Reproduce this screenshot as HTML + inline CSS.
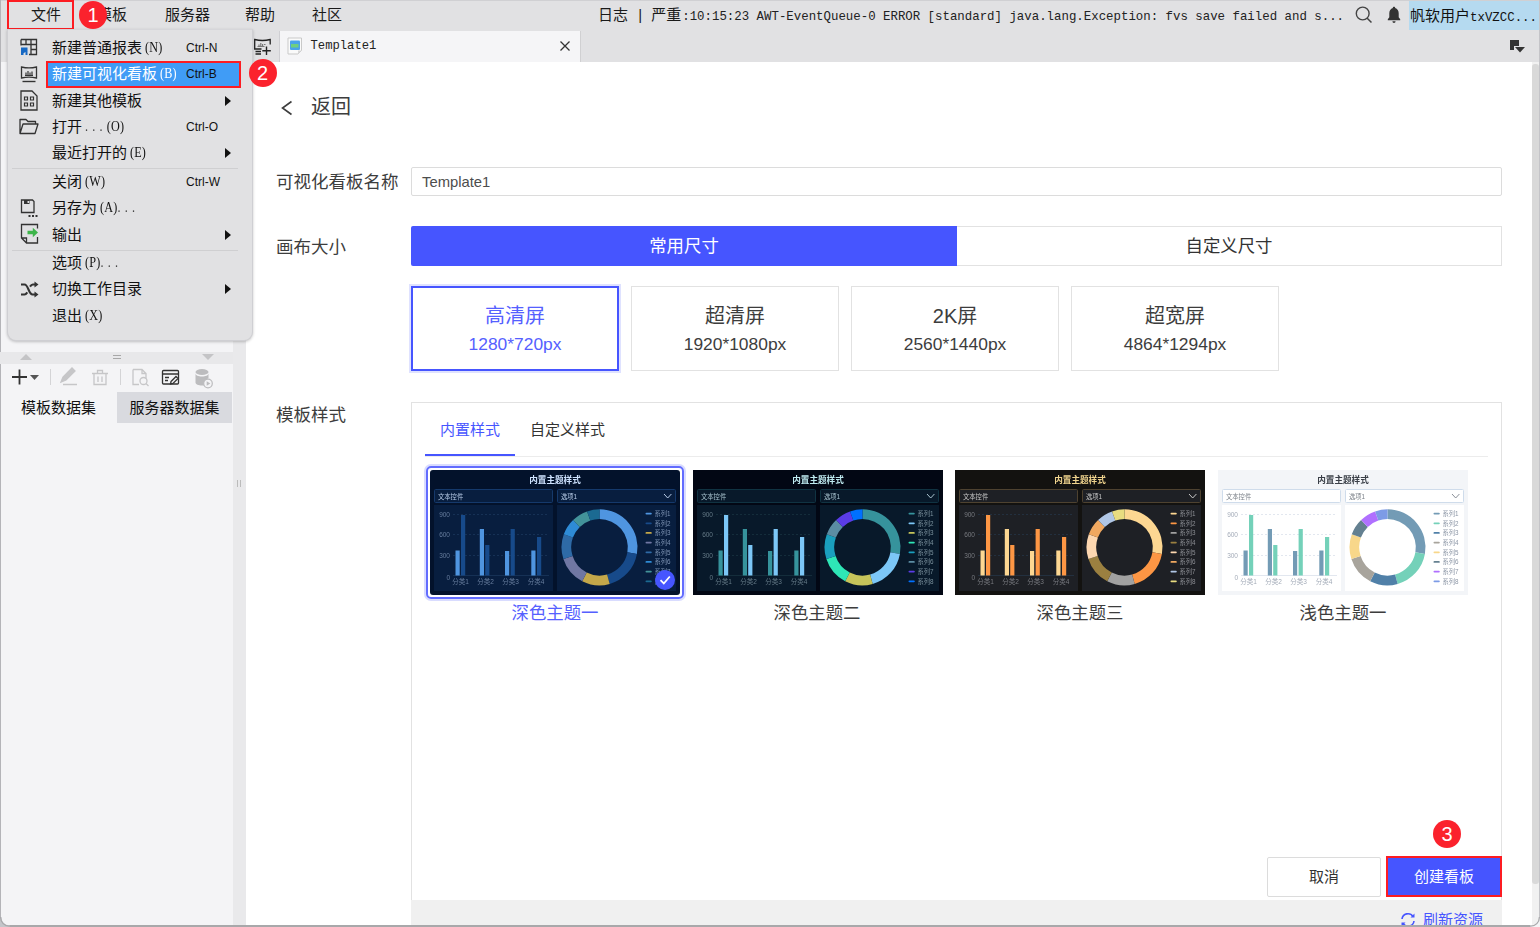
<!DOCTYPE html>
<html lang="zh-CN">
<head>
<meta charset="utf-8">
<title>新建可视化看板</title>
<style>
*{box-sizing:border-box;margin:0;padding:0}
html,body{width:1540px;height:927px;overflow:hidden;background:#fff}
body{font-family:"Liberation Sans","Noto Sans CJK SC",sans-serif;color:#333;position:relative;font-size:14px}
.abs{position:absolute}
#topbar{left:0;top:0;width:1540px;height:30px;background:#e1e1e3;border-top:1px solid #d0d0d3}
#tabbar{left:0;top:30px;width:1540px;height:32px;background:#e1e1e3}
.mi{position:absolute;top:0;height:30px;line-height:29px;font-size:15px;color:#1a1a1a;white-space:nowrap}
#log{left:598px;top:0;height:30px;line-height:30px;font-size:15px;color:#1a1a1a;white-space:nowrap}
#log .m{font-family:"Liberation Mono","Noto Sans CJK SC",monospace;font-size:12.4px;color:#222}
#user{left:1409px;top:0.5px;width:129.5px;height:29.5px;background:#b5daf0;line-height:29px;font-size:15px;color:#111;white-space:nowrap;overflow:hidden;padding-left:1px}
#user .m{font-family:"Liberation Mono",monospace;font-size:12.4px}
#left{left:0;top:62px;width:233px;height:865px;background:#f4f4f6}
#split{left:233px;top:62px;width:13px;height:865px;background:#e9e9eb}
#main{left:246px;top:62px;width:1286px;height:865px;background:#fff}
#tab{left:278.500px;top:31px;width:302px;height:31px;background:#f5f5f7;border-right:1px solid #d0d0d2;border-left:1.500px solid #cfcfd3}
#tab span{position:absolute;left:31px;top:0;line-height:30px;font-family:"Liberation Mono",monospace;font-size:12.2px;color:#222}
#menu{left:7px;top:29px;width:246px;height:312px;background:#e1e1e3;border-radius:0 0 9px 9px;box-shadow:0 1px 3px rgba(0,0,0,.22);border:1px solid #cfcfd3;border-top-color:#d6d6da}
.row{position:absolute;left:0;width:245px;height:26px;line-height:26px;font-size:15px;color:#111;white-space:nowrap}
.row .t{position:absolute;left:44px;top:0}
.row .k{position:absolute;left:178px;top:0;font-size:12px;color:#111}
.row .ar{position:absolute;left:217px;top:8px;width:0;height:0;border-left:6px solid #111;border-top:5px solid transparent;border-bottom:5px solid transparent}
.row .p{font-family:"Liberation Serif",serif;font-size:14.500px;letter-spacing:0.2px;margin-left:3px;position:relative;top:-1px;display:inline-block;transform:scaleX(.84);transform-origin:0 50%;line-height:20px;vertical-align:baseline}
.row .d{letter-spacing:5px;margin:0;color:#444}
.sep{position:absolute;left:4px;width:226px;height:1px;background:#cfcfd1}
.badge{position:absolute;width:28px;height:28px;border-radius:14px;background:#fb222d;color:#fff;font-size:20px;line-height:28px;text-align:center;font-family:"Liberation Sans",sans-serif}
.lbl{position:absolute;font-size:17.500px;color:#3d3d3d;white-space:nowrap;line-height:22px}

#back{left:280px;top:94px;font-size:20px;color:#3d3d3d;line-height:26px;white-space:nowrap}
#inp{left:411px;top:166.500px;width:1091px;height:29.500px;border:1px solid #dcdcdc;border-radius:2px;font-size:14.800px;line-height:29.500px;padding-left:10px;color:#4d4d4d}
.seg{position:absolute;top:226px;height:40px;line-height:41px;text-align:center;font-size:17.4px}
.card{position:absolute;top:286px;width:208px;height:85px;border:1px solid #e2e2e2;text-align:center;color:#3d3d3d;background:#fff}
.card b{display:block;font-weight:normal;font-size:20px;line-height:24px;margin-top:17px}
.card i{display:block;font-style:normal;font-size:17.4px;line-height:22px;margin-top:5px}
.card.sel{border:2px solid #4655ff;box-shadow:0 0 0 2px #dfe2ff;color:#5560ff}
.card.sel b{margin-top:16px}
#panel{left:411px;top:402px;width:1091px;height:500px;border:1px solid #e2e2e2;border-bottom:none;background:#fff}
.stab{position:absolute;top:418px;font-size:15px;line-height:24px;color:#333;white-space:nowrap}
.th{position:absolute;top:470px;width:250px;height:125px}
.tl{position:absolute;top:601px;width:250px;text-align:center;font-size:17.4px;line-height:24px;color:#3d3d3d}
.btn{position:absolute;top:857px;height:40px;line-height:38px;text-align:center;font-size:15px}

.dt{position:absolute;top:392px;height:31px;line-height:31px;font-size:15px;color:#111;text-align:center;white-space:nowrap}
</style>
</head>
<body>
<div id="topbar" class="abs"></div>
<div id="tabbar" class="abs"></div>
<div id="left" class="abs"></div>
<div id="split" class="abs"></div>
<div id="main" class="abs"></div>

<div class="mi" style="left:31px">文件</div>
<div class="mi" style="left:97px">模板</div>
<div class="mi" style="left:165px">服务器</div>
<div class="mi" style="left:245px">帮助</div>
<div class="mi" style="left:312px">社区</div>
<div class="abs" style="left:7px;top:0;width:67px;height:30px;border:2px solid #fd1c22"></div>
<div id="log" class="abs">日志 <span style="margin:0 5px 0 6px">|</span> 严重<span class="m" style="margin-left:1px">:10:15:23 AWT-EventQueue-0 ERROR [standard] java.lang.Exception: fvs save failed and s...</span></div>
<svg class="abs" style="left:1354px;top:5.2px" width="20" height="20" viewBox="0 0 20 20"><circle cx="8.7" cy="8.5" r="6.4" fill="none" stroke="#444" stroke-width="1.4"/><path d="M13 13l4.5 4.5" stroke="#444" stroke-width="1.5" fill="none"/></svg>
<svg class="abs" style="left:1385px;top:4.9px" width="18" height="19.5" viewBox="0 0 18 18" preserveAspectRatio="none"><path d="M9 1.500c-.7 0-1.200.5-1.200 1.200C5.600 3.400 4.300 5.300 4.300 7.600v3.600L2.800 13.200v.9h12.400v-.9l-1.500-2V7.600c0-2.300-1.300-4.200-3.500-4.900 0-.7-.5-1.200-1.200-1.200zM7.400 15a1.600 1.600 0 003.200 0z" fill="#333"/></svg>
<div id="user" class="abs">帆软用户<span class="m">txVZCC...</span></div>
<div id="tab" class="abs"><svg class="abs" style="left:7px;top:6px" width="16" height="18" viewBox="0 0 16 18"><path d="M1 1h13.500v12.500l-3.500 3.500H1z" fill="#fafafa" stroke="#c9c9c9" stroke-width="1"/><path d="M14.500 13.500h-3.500v3.500z" fill="#d8d8d8"/><rect x="3" y="3.500" width="10" height="9.500" rx="1" fill="#4aa3ea"/><rect x="4" y="7" width="7.500" height="3.500" fill="#6fcf7f"/></svg><span>Template1</span>
<svg class="abs" style="left:279px;top:9px" width="12" height="12" viewBox="0 0 12 12"><path d="M1.500 1.500l9 9M10.500 1.500l-9 9" stroke="#333" stroke-width="1.300" fill="none"/></svg></div>
<svg class="abs" style="left:253px;top:38px" width="20" height="18" viewBox="0 0 20 18"><path d="M8.500 11H1.700V1.500c5 1.300 10.500 1.300 15.500 0v5" fill="none" stroke="#222" stroke-width="1.300"/><path d="M2.500 13.500h5.500M2.500 16h5.500" stroke="#222" stroke-width="1.300"/><path d="M4.500 8.500h7M6 8V6.500M7.800 8V5M9.600 8V6M11 6.500h1.500" stroke="#777" stroke-width="1.200" fill="none"/><path d="M13.500 8.500v8.500M9.300 12.700h8.500" stroke="#222" stroke-width="1.400"/></svg>
<svg class="abs" style="left:1509px;top:39px" width="18" height="14" viewBox="0 0 18 14"><path d="M1 1h9v6H5v4H1z" fill="#333"/><path d="M6 8h10l-5 5.500z" fill="#333"/></svg>
<!--TOP-->

<div id="back" class="abs"><svg width="14" height="18" viewBox="0 0 14 18" style="vertical-align:-3px;margin-right:17px"><path d="M11.500 2.500L2.500 9l9 6.500" fill="none" stroke="#3d3d3d" stroke-width="1.600"/></svg>返回</div>
<div class="lbl" style="left:276px;top:171px">可视化看板名称</div>
<div id="inp" class="abs">Template1</div>
<div class="lbl" style="left:276px;top:235.500px">画布大小</div>
<div class="seg" style="left:411px;width:546px;background:#4655ff;color:#fff;border-radius:2px 0 0 2px">常用尺寸</div>
<div class="seg" style="left:957px;width:545px;border:1px solid #e2e2e2;border-left:none;color:#333;line-height:39px">自定义尺寸</div>
<div class="card sel" style="left:411px"><b>高清屏</b><i>1280*720px</i></div>
<div class="card" style="left:631px"><b>超清屏</b><i>1920*1080px</i></div>
<div class="card" style="left:851px"><b>2K屏</b><i>2560*1440px</i></div>
<div class="card" style="left:1071px"><b>超宽屏</b><i>4864*1294px</i></div>
<div class="lbl" style="left:276px;top:404px">模板样式</div>
<div id="panel" class="abs"></div>
<div class="stab" style="left:440px;color:#4655ff">内置样式</div>
<div class="stab" style="left:530px">自定义样式</div>
<div class="abs" style="left:425px;top:456px;width:1063px;height:1px;background:#ececec"></div>
<div class="abs" style="left:425px;top:454px;width:90px;height:2px;background:#4655ff"></div>
<div class="abs" style="left:426px;top:466px;width:258px;height:133px;border:2px solid #626cff;border-radius:5px;box-shadow:0 0 0 2px #d9dcff"></div>
<!--TH--><!--THS--><svg width="0" height="0" style="position:absolute"><defs><filter id="thb" color-interpolation-filters="sRGB" x="0" y="0" width="100%" height="100%"><feGaussianBlur stdDeviation="0.45"/></filter></defs></svg>
<svg class="th" style="left:430px" viewBox="0 0 250 125" font-family="Liberation Sans,Noto Sans CJK SC,sans-serif">
<rect width="250" height="125" rx="3" fill="#03122b"/>
<g filter="url(#thb)">
<text x="125" y="13" text-anchor="middle" font-size="8.600" font-weight="bold" fill="#cfe3ff">内置主题样式</text>
<rect x="4.500" y="19.500" width="118" height="13" rx="1" fill="#081e3f" stroke="#15396b"/><rect x="127.500" y="19.500" width="118" height="13" rx="1" fill="#081e3f" stroke="#15396b"/>
<text x="8" y="28.500" font-size="6.300" fill="#b9cde8">文本控件</text><text x="131" y="28.500" font-size="6.300" fill="#b9cde8">选项1</text>
<path d="M234 24l3.700 4 3.700-4" fill="none" stroke="#b9cde8" stroke-width="1"/>
<rect x="4" y="35" width="119" height="86" fill="#081e3f"/><rect x="127" y="35" width="119" height="86" fill="#081e3f"/>
<g font-size="6.500" fill="#7d93b3" opacity=".8" text-anchor="end"><text x="20" y="46.500">900</text><text x="20" y="67">600</text><text x="20" y="88">300</text><text x="20" y="109.500">0</text></g>
<path d="M23 44.500h96M23 64.500h96M23 85.500h96" stroke="#1d3a5e" stroke-width=".7" stroke-dasharray="2 2" fill="none"/><path d="M23 105.500h96" stroke="#1d3a5e" stroke-width=".7"/>
<path d="M25.5 80.5h4.200V105.500h-4.200zM49.8 59h4.200V105.500h-4.200zM75 81h4.200V105.500h-4.200zM101.3 80.5h4.200V105.500h-4.200z" fill="#4f95e0"/><path d="M31 45h4.200V105.500h-4.200zM55.2 75h4.200V105.500h-4.200zM80.6 59h4.200V105.500h-4.200zM107 67h4.200V105.500h-4.200z" fill="#174a8a"/>
<g font-size="6.500" fill="#7d93b3" opacity=".8" text-anchor="middle"><text x="30.500" y="114">分类1</text><text x="55.500" y="114">分类2</text><text x="80.500" y="114">分类3</text><text x="106" y="114">分类4</text></g>
<path d="M169.5 39.3A38.0 38.0 0 0 1 206.9 83.9L197.4 82.2A28.3 28.3 0 0 0 169.5 49.0Z" fill="#4f95e0"/><path d="M206.9 83.9A38.0 38.0 0 0 1 179.7 113.9L177.1 104.6A28.3 28.3 0 0 0 197.4 82.2Z" fill="#174a8a"/><path d="M179.7 113.9A38.0 38.0 0 0 1 152.2 111.2L156.7 102.5A28.3 28.3 0 0 0 177.1 104.6Z" fill="#c4a84a"/><path d="M152.2 111.2A38.0 38.0 0 0 1 133.4 89.0L142.6 86.0A28.3 28.3 0 0 0 156.7 102.5Z" fill="#7077a3"/><path d="M133.4 89.0A38.0 38.0 0 0 1 133.8 64.3L142.9 67.6A28.3 28.3 0 0 0 142.6 86.0Z" fill="#2e6aa6"/><path d="M133.8 64.3A38.0 38.0 0 0 1 143.1 50.0L149.8 56.9A28.3 28.3 0 0 0 142.9 67.6Z" fill="#2e8bd6"/><path d="M143.1 50.0A38.0 38.0 0 0 1 157.1 41.4L160.3 50.5A28.3 28.3 0 0 0 149.8 56.9Z" fill="#43939a"/><path d="M157.1 41.4A38.0 38.0 0 0 1 169.5 39.3L169.5 49.0A28.3 28.3 0 0 0 160.3 50.5Z" fill="#1b6a92"/>
<g font-size="6.300" fill="#7d93b3"><rect x="215.500" y="42.7" width="6.300" height="1.800" rx=".9" fill="#4f95e0"/><text x="224.500" y="45.9">系列1</text><rect x="215.500" y="52.4" width="6.300" height="1.800" rx=".9" fill="#174a8a"/><text x="224.500" y="55.6">系列2</text><rect x="215.500" y="62.0" width="6.300" height="1.800" rx=".9" fill="#c4a84a"/><text x="224.500" y="65.2">系列3</text><rect x="215.500" y="71.7" width="6.300" height="1.800" rx=".9" fill="#7077a3"/><text x="224.500" y="74.9">系列4</text><rect x="215.500" y="81.4" width="6.300" height="1.800" rx=".9" fill="#2e6aa6"/><text x="224.500" y="84.6">系列5</text><rect x="215.500" y="91.0" width="6.300" height="1.800" rx=".9" fill="#2e8bd6"/><text x="224.500" y="94.2">系列6</text><rect x="215.500" y="100.7" width="6.300" height="1.800" rx=".9" fill="#43939a"/><text x="224.500" y="103.9">系列7</text><rect x="215.500" y="110.4" width="6.300" height="1.800" rx=".9" fill="#1b6a92"/><text x="224.500" y="113.6">系列8</text></g>
</g>
</svg>
<svg class="th" style="left:692.5px" viewBox="0 0 250 125" font-family="Liberation Sans,Noto Sans CJK SC,sans-serif">
<rect width="250" height="125" rx="0" fill="#020714"/>
<g filter="url(#thb)">
<text x="125" y="13" text-anchor="middle" font-size="8.600" font-weight="bold" fill="#bfeaf0">内置主题样式</text>
<rect x="4.500" y="19.500" width="118" height="13" rx="1" fill="#08192a" stroke="#103342"/><rect x="127.500" y="19.500" width="118" height="13" rx="1" fill="#08192a" stroke="#103342"/>
<text x="8" y="28.500" font-size="6.300" fill="#a9c3cf">文本控件</text><text x="131" y="28.500" font-size="6.300" fill="#a9c3cf">选项1</text>
<path d="M234 24l3.700 4 3.700-4" fill="none" stroke="#a9c3cf" stroke-width="1"/>
<rect x="4" y="35" width="119" height="86" fill="#08192a"/><rect x="127" y="35" width="119" height="86" fill="#08192a"/>
<g font-size="6.500" fill="#7a909c" opacity=".8" text-anchor="end"><text x="20" y="46.500">900</text><text x="20" y="67">600</text><text x="20" y="88">300</text><text x="20" y="109.500">0</text></g>
<path d="M23 44.500h96M23 64.500h96M23 85.500h96" stroke="#1a3644" stroke-width=".7" stroke-dasharray="2 2" fill="none"/><path d="M23 105.500h96" stroke="#1a3644" stroke-width=".7"/>
<path d="M25.5 80.5h4.200V105.500h-4.200zM49.8 59h4.200V105.500h-4.200zM75 81h4.200V105.500h-4.200zM101.3 80.5h4.200V105.500h-4.200z" fill="#36939c"/><path d="M31 45h4.200V105.500h-4.200zM55.2 75h4.200V105.500h-4.200zM80.6 59h4.200V105.500h-4.200zM107 67h4.200V105.500h-4.200z" fill="#7cc7f7"/>
<g font-size="6.500" fill="#7a909c" opacity=".8" text-anchor="middle"><text x="30.500" y="114">分类1</text><text x="55.500" y="114">分类2</text><text x="80.500" y="114">分类3</text><text x="106" y="114">分类4</text></g>
<path d="M169.5 39.3A38.0 38.0 0 0 1 206.9 83.9L197.4 82.2A28.3 28.3 0 0 0 169.5 49.0Z" fill="#36939c"/><path d="M206.9 83.9A38.0 38.0 0 0 1 179.7 113.9L177.1 104.6A28.3 28.3 0 0 0 197.4 82.2Z" fill="#7cc7f7"/><path d="M179.7 113.9A38.0 38.0 0 0 1 152.2 111.2L156.7 102.5A28.3 28.3 0 0 0 177.1 104.6Z" fill="#c6c45a"/><path d="M152.2 111.2A38.0 38.0 0 0 1 133.4 89.0L142.6 86.0A28.3 28.3 0 0 0 156.7 102.5Z" fill="#2ee6b6"/><path d="M133.4 89.0A38.0 38.0 0 0 1 133.8 64.3L142.9 67.6A28.3 28.3 0 0 0 142.6 86.0Z" fill="#1a9fbd"/><path d="M133.8 64.3A38.0 38.0 0 0 1 143.1 50.0L149.8 56.9A28.3 28.3 0 0 0 142.9 67.6Z" fill="#5b8da3"/><path d="M143.1 50.0A38.0 38.0 0 0 1 157.1 41.4L160.3 50.5A28.3 28.3 0 0 0 149.8 56.9Z" fill="#5a3ce6"/><path d="M157.1 41.4A38.0 38.0 0 0 1 169.5 39.3L169.5 49.0A28.3 28.3 0 0 0 160.3 50.5Z" fill="#0070ff"/>
<g font-size="6.300" fill="#7a909c"><rect x="215.500" y="42.7" width="6.300" height="1.800" rx=".9" fill="#36939c"/><text x="224.500" y="45.9">系列1</text><rect x="215.500" y="52.4" width="6.300" height="1.800" rx=".9" fill="#7cc7f7"/><text x="224.500" y="55.6">系列2</text><rect x="215.500" y="62.0" width="6.300" height="1.800" rx=".9" fill="#c6c45a"/><text x="224.500" y="65.2">系列3</text><rect x="215.500" y="71.7" width="6.300" height="1.800" rx=".9" fill="#2ee6b6"/><text x="224.500" y="74.9">系列4</text><rect x="215.500" y="81.4" width="6.300" height="1.800" rx=".9" fill="#1a9fbd"/><text x="224.500" y="84.6">系列5</text><rect x="215.500" y="91.0" width="6.300" height="1.800" rx=".9" fill="#5b8da3"/><text x="224.500" y="94.2">系列6</text><rect x="215.500" y="100.7" width="6.300" height="1.800" rx=".9" fill="#5a3ce6"/><text x="224.500" y="103.9">系列7</text><rect x="215.500" y="110.4" width="6.300" height="1.800" rx=".9" fill="#0070ff"/><text x="224.500" y="113.6">系列8</text></g>
</g>
</svg>
<svg class="th" style="left:955px" viewBox="0 0 250 125" font-family="Liberation Sans,Noto Sans CJK SC,sans-serif">
<rect width="250" height="125" rx="0" fill="#131210"/>
<g filter="url(#thb)">
<text x="125" y="13" text-anchor="middle" font-size="8.600" font-weight="bold" fill="#f0d48e">内置主题样式</text>
<rect x="4.500" y="19.500" width="118" height="13" rx="1" fill="#1e2025" stroke="#4e4230"/><rect x="127.500" y="19.500" width="118" height="13" rx="1" fill="#1e2025" stroke="#4e4230"/>
<text x="8" y="28.500" font-size="6.300" fill="#c8c8c8">文本控件</text><text x="131" y="28.500" font-size="6.300" fill="#c8c8c8">选项1</text>
<path d="M234 24l3.700 4 3.700-4" fill="none" stroke="#c8c8c8" stroke-width="1"/>
<rect x="4" y="35" width="119" height="86" fill="#1e2025"/><rect x="127" y="35" width="119" height="86" fill="#1e2025"/>
<g font-size="6.500" fill="#8c8e94" opacity=".8" text-anchor="end"><text x="20" y="46.500">900</text><text x="20" y="67">600</text><text x="20" y="88">300</text><text x="20" y="109.500">0</text></g>
<path d="M23 44.500h96M23 64.500h96M23 85.500h96" stroke="#25384a" stroke-width=".7" stroke-dasharray="2 2" fill="none"/><path d="M23 105.500h96" stroke="#25384a" stroke-width=".7"/>
<path d="M25.5 80.5h4.200V105.500h-4.200zM49.8 59h4.200V105.500h-4.200zM75 81h4.200V105.500h-4.200zM101.3 80.5h4.200V105.500h-4.200z" fill="#fdd792"/><path d="M31 45h4.200V105.500h-4.200zM55.2 75h4.200V105.500h-4.200zM80.6 59h4.200V105.500h-4.200zM107 67h4.200V105.500h-4.200z" fill="#fd9644"/>
<g font-size="6.500" fill="#8c8e94" opacity=".8" text-anchor="middle"><text x="30.500" y="114">分类1</text><text x="55.500" y="114">分类2</text><text x="80.500" y="114">分类3</text><text x="106" y="114">分类4</text></g>
<path d="M169.5 39.3A38.0 38.0 0 0 1 206.9 83.9L197.4 82.2A28.3 28.3 0 0 0 169.5 49.0Z" fill="#fdd792"/><path d="M206.9 83.9A38.0 38.0 0 0 1 179.7 113.9L177.1 104.6A28.3 28.3 0 0 0 197.4 82.2Z" fill="#fd9644"/><path d="M179.7 113.9A38.0 38.0 0 0 1 152.2 111.2L156.7 102.5A28.3 28.3 0 0 0 177.1 104.6Z" fill="#a1a1a1"/><path d="M152.2 111.2A38.0 38.0 0 0 1 133.4 89.0L142.6 86.0A28.3 28.3 0 0 0 156.7 102.5Z" fill="#9b8040"/><path d="M133.4 89.0A38.0 38.0 0 0 1 133.8 64.3L142.9 67.6A28.3 28.3 0 0 0 142.6 86.0Z" fill="#fdd7b0"/><path d="M133.8 64.3A38.0 38.0 0 0 1 143.1 50.0L149.8 56.9A28.3 28.3 0 0 0 142.9 67.6Z" fill="#f0a860"/><path d="M143.1 50.0A38.0 38.0 0 0 1 157.1 41.4L160.3 50.5A28.3 28.3 0 0 0 149.8 56.9Z" fill="#b0c6e6"/><path d="M157.1 41.4A38.0 38.0 0 0 1 169.5 39.3L169.5 49.0A28.3 28.3 0 0 0 160.3 50.5Z" fill="#e8dc80"/>
<g font-size="6.300" fill="#8c8e94"><rect x="215.500" y="42.7" width="6.300" height="1.800" rx=".9" fill="#fdd792"/><text x="224.500" y="45.9">系列1</text><rect x="215.500" y="52.4" width="6.300" height="1.800" rx=".9" fill="#fd9644"/><text x="224.500" y="55.6">系列2</text><rect x="215.500" y="62.0" width="6.300" height="1.800" rx=".9" fill="#a1a1a1"/><text x="224.500" y="65.2">系列3</text><rect x="215.500" y="71.7" width="6.300" height="1.800" rx=".9" fill="#9b8040"/><text x="224.500" y="74.9">系列4</text><rect x="215.500" y="81.4" width="6.300" height="1.800" rx=".9" fill="#fdd7b0"/><text x="224.500" y="84.6">系列5</text><rect x="215.500" y="91.0" width="6.300" height="1.800" rx=".9" fill="#f0a860"/><text x="224.500" y="94.2">系列6</text><rect x="215.500" y="100.7" width="6.300" height="1.800" rx=".9" fill="#b0c6e6"/><text x="224.500" y="103.9">系列7</text><rect x="215.500" y="110.4" width="6.300" height="1.800" rx=".9" fill="#e8dc80"/><text x="224.500" y="113.6">系列8</text></g>
</g>
</svg>
<svg class="th" style="left:1218px" viewBox="0 0 250 125" font-family="Liberation Sans,Noto Sans CJK SC,sans-serif">
<rect width="250" height="125" rx="0" fill="#f3f5f8"/>
<g filter="url(#thb)">
<text x="125" y="13" text-anchor="middle" font-size="8.600" font-weight="bold" fill="#3a3f47">内置主题样式</text>
<rect x="4.500" y="19.500" width="118" height="13" rx="1" fill="#ffffff" stroke="#cfdceb"/><rect x="127.500" y="19.500" width="118" height="13" rx="1" fill="#ffffff" stroke="#cfdceb"/>
<text x="8" y="28.500" font-size="6.300" fill="#7a8088">文本控件</text><text x="131" y="28.500" font-size="6.300" fill="#7a8088">选项1</text>
<path d="M234 24l3.700 4 3.700-4" fill="none" stroke="#8a9098" stroke-width="1"/>
<rect x="4" y="35" width="119" height="86" fill="#ffffff"/><rect x="127" y="35" width="119" height="86" fill="#ffffff"/>
<g font-size="6.500" fill="#8c96a6" opacity=".8" text-anchor="end"><text x="20" y="46.500">900</text><text x="20" y="67">600</text><text x="20" y="88">300</text><text x="20" y="109.500">0</text></g>
<path d="M23 44.500h96M23 64.500h96M23 85.500h96" stroke="#d6dde8" stroke-width=".7" stroke-dasharray="2 2" fill="none"/><path d="M23 105.500h96" stroke="#d6dde8" stroke-width=".7"/>
<path d="M25.5 80.5h4.200V105.500h-4.200zM49.8 59h4.200V105.500h-4.200zM75 81h4.200V105.500h-4.200zM101.3 80.5h4.200V105.500h-4.200z" fill="#739bb5"/><path d="M31 45h4.200V105.500h-4.200zM55.2 75h4.200V105.500h-4.200zM80.6 59h4.200V105.500h-4.200zM107 67h4.200V105.500h-4.200z" fill="#74d1b9"/>
<g font-size="6.500" fill="#8c96a6" opacity=".8" text-anchor="middle"><text x="30.500" y="114">分类1</text><text x="55.500" y="114">分类2</text><text x="80.500" y="114">分类3</text><text x="106" y="114">分类4</text></g>
<path d="M169.5 39.3A38.0 38.0 0 0 1 206.9 83.9L197.4 82.2A28.3 28.3 0 0 0 169.5 49.0Z" fill="#739bb5"/><path d="M206.9 83.9A38.0 38.0 0 0 1 179.7 113.9L177.1 104.6A28.3 28.3 0 0 0 197.4 82.2Z" fill="#74d1b9"/><path d="M179.7 113.9A38.0 38.0 0 0 1 152.2 111.2L156.7 102.5A28.3 28.3 0 0 0 177.1 104.6Z" fill="#5080a8"/><path d="M152.2 111.2A38.0 38.0 0 0 1 133.4 89.0L142.6 86.0A28.3 28.3 0 0 0 156.7 102.5Z" fill="#a8a49c"/><path d="M133.4 89.0A38.0 38.0 0 0 1 133.8 64.3L142.9 67.6A28.3 28.3 0 0 0 142.6 86.0Z" fill="#f8d78a"/><path d="M133.8 64.3A38.0 38.0 0 0 1 143.1 50.0L149.8 56.9A28.3 28.3 0 0 0 142.9 67.6Z" fill="#648090"/><path d="M143.1 50.0A38.0 38.0 0 0 1 157.1 41.4L160.3 50.5A28.3 28.3 0 0 0 149.8 56.9Z" fill="#b070ff"/><path d="M157.1 41.4A38.0 38.0 0 0 1 169.5 39.3L169.5 49.0A28.3 28.3 0 0 0 160.3 50.5Z" fill="#7d9be6"/>
<g font-size="6.300" fill="#8c96a6"><rect x="215.500" y="42.7" width="6.300" height="1.800" rx=".9" fill="#739bb5"/><text x="224.500" y="45.9">系列1</text><rect x="215.500" y="52.4" width="6.300" height="1.800" rx=".9" fill="#74d1b9"/><text x="224.500" y="55.6">系列2</text><rect x="215.500" y="62.0" width="6.300" height="1.800" rx=".9" fill="#5080a8"/><text x="224.500" y="65.2">系列3</text><rect x="215.500" y="71.7" width="6.300" height="1.800" rx=".9" fill="#a8a49c"/><text x="224.500" y="74.9">系列4</text><rect x="215.500" y="81.4" width="6.300" height="1.800" rx=".9" fill="#f8d78a"/><text x="224.500" y="84.6">系列5</text><rect x="215.500" y="91.0" width="6.300" height="1.800" rx=".9" fill="#648090"/><text x="224.500" y="94.2">系列6</text><rect x="215.500" y="100.7" width="6.300" height="1.800" rx=".9" fill="#b070ff"/><text x="224.500" y="103.9">系列7</text><rect x="215.500" y="110.4" width="6.300" height="1.800" rx=".9" fill="#7d9be6"/><text x="224.500" y="113.6">系列8</text></g>
</g>
</svg>
<svg class="abs" style="left:655px;top:570px" width="20" height="20" viewBox="0 0 20 20"><circle cx="10" cy="10" r="10" fill="#4655ff"/><path d="M5.500 10.200l3.300 3.300 6-7" fill="none" stroke="#fff" stroke-width="1.800"/></svg>
<!--THE-->
<div class="tl" style="left:430px;color:#5560ff">深色主题一</div>
<div class="tl" style="left:692px">深色主题二</div>
<div class="tl" style="left:955px">深色主题三</div>
<div class="tl" style="left:1218px">浅色主题一</div>
<div class="btn" style="left:1267px;width:114px;border:1px solid #dcdcdc;border-radius:2px;color:#333;background:#fff">取消</div>
<div class="btn" style="left:1386px;top:856px;height:41px;width:116px;background:#4655ff;color:#fff;border:2px solid #fd1c22;line-height:38px">创建看板</div>
<div class="badge" style="left:1433px;top:820px">3</div>
<div class="abs" style="left:411px;top:900px;width:1091px;height:26px;background:#f0f0f0"></div>
<div class="abs" style="left:1399px;top:910px;font-size:15px;line-height:20px;color:#4655ff;white-space:nowrap"><svg width="18" height="16" viewBox="0 0 18 16" style="vertical-align:-3px;margin-right:6px"><path d="M3 7a6 6 0 0111-2.500M15 9a6 6 0 01-11 2.500" fill="none" stroke="#4655ff" stroke-width="1.600"/><path d="M15.500 1.500v4h-4zM2.500 14.500v-4h4z" fill="#4655ff"/></svg>刷新资源</div>
<div class="abs" style="left:1532px;top:62px;width:7px;height:864px;background:#f1f1f1"></div><div class="abs" style="left:1532px;top:64px;width:6.500px;height:820px;background:#d9d9d9;border-radius:3px"></div>
<div class="abs" style="left:1538.500px;top:0;width:1.500px;height:919px;background:#c4c4c8"></div>
<div class="abs" style="left:0;top:0;width:1.300px;height:918px;background:#b4b4b8"></div>
<div class="abs" style="left:9px;top:925.300px;width:1522px;height:1.700px;background:#a8a8aa"></div>
<svg class="abs" style="left:0;top:917px" width="10" height="10" viewBox="0 0 10 10"><path d="M0 0v10h10V8.300H9.300A8 8 0 011.300 .3V0z" fill="#c4c6ca"/><path d="M.65 0v.5A8.650 8.650 0 009.300 9.150H10" fill="none" stroke="#a8a8aa" stroke-width="1.300"/></svg>
<svg class="abs" style="left:1530px;top:917px" width="10" height="10" viewBox="0 0 10 10"><path d="M10 0v10H0V8.300H.7A8 8 0 008.700 .3V0z" fill="#f4f4f6"/><path d="M9.350 0v.5A8.650 8.650 0 01.7 9.150H0" fill="none" stroke="#a8a8aa" stroke-width="1.300"/></svg>
<!--MAIN-->

<div class="abs" style="left:0;top:352px;width:233px;height:12px;background:#e8e8ea"></div>
<div class="abs" style="left:20px;top:354px;width:0;height:0;border-left:6px solid transparent;border-right:6px solid transparent;border-bottom:6px solid #c4c4c6"></div>
<div class="abs" style="left:202px;top:354px;width:0;height:0;border-left:6px solid transparent;border-right:6px solid transparent;border-top:6px solid #c4c4c6"></div>
<div class="abs" style="left:113px;top:355px;width:8px;height:1px;background:#a8a8a8"></div>
<div class="abs" style="left:113px;top:358px;width:8px;height:1px;background:#a8a8a8"></div>
<svg class="abs" style="left:8px;top:364px" width="220" height="26" viewBox="0 0 220 26">
<path d="M4 13h15M11.500 5.500v15" stroke="#333" stroke-width="1.800" fill="none"/>
<path d="M22 11h9l-4.500 5z" fill="#555"/>
<path d="M42.500 5v16M112.500 5v16" stroke="#d4d4d6" stroke-width="1"/>
<g fill="none" stroke="#c6c6c8" stroke-width="1.300">
<path d="M53 18l2-5 9-9 3 3-9 9zM55 20.500h14" fill="#c6c6c8"/>
<path d="M84 9.500h16M86 9.500v11h12v-11M89.500 9V6.500h5V9M90 12.500v5.500M94 12.500v5.500"/>
<path d="M125 5.500h9l4 4v5M125 5.500v15h6M134 5.500v4h4"/>
<circle cx="135.500" cy="17" r="3.500"/><path d="M138 19.500l2.500 2.500"/>
</g>
<g fill="none" stroke="#333" stroke-width="1.300">
<rect x="154.500" y="6.500" width="16" height="13.500" rx="1"/><path d="M154.500 10h16M157 13.500h4M157 16.500h3"/>
<path d="M163 17.500l5-5 2 2-5 5-2.500.5z" fill="#eeeef0"/>
</g>
<g fill="#bcbcbe"><ellipse cx="194" cy="8" rx="6.500" ry="3"/><path d="M187.500 9.500v9c0 1.700 3 3 6.500 3 1 0 2-.1 2.800-.3a5.500 5.500 0 013.700-6.900V9.500c0 1.700-3 3-6.500 3s-6.500-1.300-6.500-3z"/><circle cx="200" cy="19.500" r="4.300" fill="#f4f4f6" stroke="#bcbcbe" stroke-width="1.200"/><path d="M198.700 17.300l3.600 2.200-3.600 2.200z"/></g>
</svg>
<div class="dt" style="left:0;width:117px">模板数据集</div>
<div class="dt" style="left:117px;width:115px;background:#d9dadf">服务器数据集</div>
<div class="abs" style="left:237px;top:480px;width:1px;height:7px;background:#bbb"></div>
<div class="abs" style="left:240px;top:480px;width:1px;height:7px;background:#bbb"></div>
<!--LEFT-->
<div id="menu" class="abs">
<div class="abs" style="left:38px;top:31px;width:195px;height:27px;background:#409cf6;border:2px solid #fd1c22"></div>
<div class="row" style="top:5px"><span class="t">新建普通报表<span class="p">(N)</span></span><span class="k">Ctrl-N</span></div>
<div class="row" style="top:31px;color:#fff"><span class="t">新建可视化看板<span class="p">(B)</span></span><span class="k">Ctrl-B</span></div>
<div class="row" style="top:58px"><span class="t">新建其他模板</span><span class="ar"></span></div>
<div class="row" style="top:84px"><span class="t">打开<span class="p"><span class="d">...</span>(O)</span></span><span class="k">Ctrl-O</span></div>
<div class="row" style="top:110px"><span class="t">最近打开的<span class="p">(E)</span></span><span class="ar"></span></div>
<div class="row" style="top:139px"><span class="t">关闭<span class="p">(W)</span></span><span class="k">Ctrl-W</span></div>
<div class="row" style="top:165px"><span class="t">另存为<span class="p">(A)<span class="d">...</span></span></span></div>
<div class="row" style="top:192px"><span class="t">输出</span><span class="ar"></span></div>
<div class="row" style="top:220px"><span class="t">选项<span class="p">(P)<span class="d">...</span></span></span></div>
<div class="row" style="top:246px"><span class="t">切换工作目录</span><span class="ar"></span></div>
<div class="row" style="top:273px"><span class="t">退出<span class="p">(X)</span></span></div>
<div class="sep" style="top:138px"></div><div class="sep" style="top:219.500px"></div>
<svg class="abs" style="left:12px;top:8px" width="18" height="18" viewBox="0 0 18 18"><path d="M1 1.500h15.500v15H9M1 1.500v6M1 6.500h15.500M6 1.500v5M11 1.500v15M11 11.500h5.500" fill="none" stroke="#333" stroke-width="1.300"/><path d="M1 17V9.500h6.500V17H5.500v-3l-2 1.200V17z" fill="#1769c4"/></svg>
<svg class="abs" style="left:12px;top:35px" width="18" height="18" viewBox="0 0 18 18"><path d="M1.500 2c5 1.200 10 1.200 15 0v11c-5-1.200-10-1.200-15 0z" fill="none" stroke="#333" stroke-width="1.300"/><path d="M5 10.500h8M6 10V7.500M8 10V6M10 10V7.500M12 10V6.500" stroke="#333" stroke-width="1.200"/><path d="M2.500 16.500h13" stroke="#333" stroke-width="1.400"/></svg>
<svg class="abs" style="left:12px;top:60px" width="18" height="21" viewBox="0 0 18 21"><path d="M1 1h11l5 5v14H1z" fill="none" stroke="#333" stroke-width="1.300"/><path d="M4.500 7h3v3h-3zM10.500 7h3v3h-3zM4.500 13h3v3h-3zM10.500 13h3v3h-3z" fill="none" stroke="#333" stroke-width="1.200"/></svg>
<svg class="abs" style="left:11px;top:88px" width="20" height="17" viewBox="0 0 20 17"><path d="M1 15.500V1.500h6l2 2h7.500V6M1 15.500l3-9.500h15l-3 9.500z" fill="none" stroke="#333" stroke-width="1.300" stroke-linejoin="round"/></svg>
<svg class="abs" style="left:12px;top:169px" width="19" height="19" viewBox="0 0 19 19"><path d="M1.500 1h11l1.500 1.500V13.500H1.500z" fill="none" stroke="#333" stroke-width="1.300"/><path d="M4 1h5.500v4H4z" fill="#333"/><rect x="7.500" y="2" width="1.500" height="2" fill="#e1e1e3"/><path d="M8.500 16h2v2h-2zM12 16h2v2h-2zM15.500 16h2v2h-2z" fill="#333"/></svg>
<svg class="abs" style="left:12px;top:193px" width="19" height="21" viewBox="0 0 19 21"><path d="M17.500 5.500V1.500H1.500V15l5 5h11v-6M1.500 15h5v5" fill="none" stroke="#333" stroke-width="1.300"/><path d="M7.500 7.700h5.300V4.700l5.200 4.800-5.200 4.800v-3H7.500z" fill="#3db54a"/></svg>
<svg class="abs" style="left:12px;top:251px" width="19" height="17" viewBox="0 0 19 17"><path d="M1 3.500h3.500c4 0 4 10 8 10h3M1 13.500h3.500c1.200 0 2-1 2.800-2.200M10 5.700c.8-1.200 1.600-2.200 2.800-2.200H15.500" fill="none" stroke="#333" stroke-width="2.100"/><path d="M14.500 0.500l4 3-4 3zM14.500 10.500l4 3-4 3z" fill="#333"/></svg>
</div>
<div class="badge" style="left:79px;top:1px">1</div>
<div class="badge" style="left:248.500px;top:59px">2</div>
<!--MENU-->
</body>
</html>
